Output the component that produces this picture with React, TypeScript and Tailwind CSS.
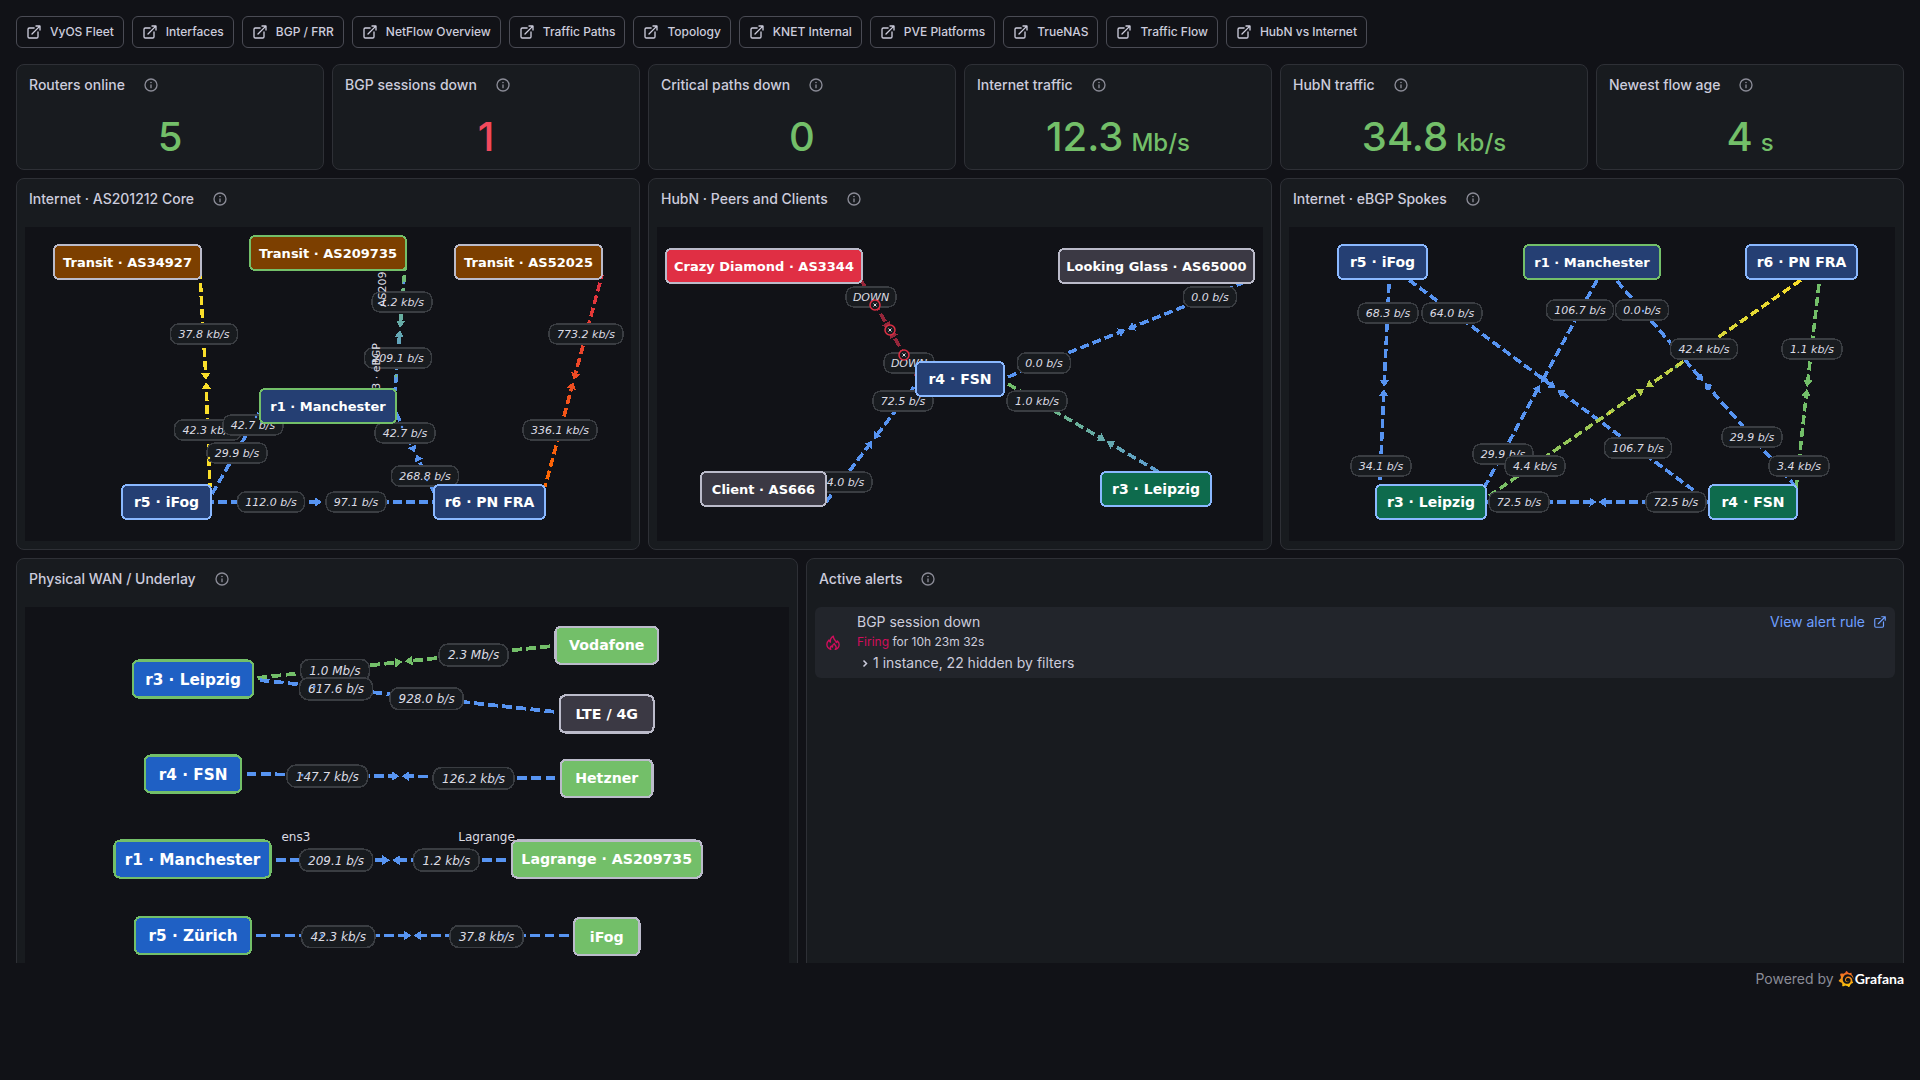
import { ReactNode } from "react";
import { SiGrafana } from "react-icons/si";

const GREEN = "#73bf69";
const BLUE = "#5794f2";
const LIGHT_BLUE = "#8ab8ff";
const GREY = "#bbbbca";
const YELLOW = "#fade2a";
const RED = "#e02f44";
const ORANGE = "#ff6a00";
const BROWN = "#7c3f00";
const NAVY = "#253f73";
const ROYAL = "#1f60c4";
const FOREST = "#0e6b4d";
const SLATE = "#3b3944";

type Point = [number, number];

interface MapNode {
  label: string;
  x: number;
  y: number;
  w: number;
  fill: string;
  stroke: string;
  size: number;
}

interface MapLink {
  a: Point;
  b: Point;
  mid?: Point;
  from: string;
  to?: string;
  phase?: number;
}

interface Rate {
  text: string;
  x: number;
  y: number;
}

interface Weathermap {
  name: string;
  width: number;
  height: number;
  nodes: MapNode[];
  links: MapLink[];
  rates: Rate[];
  dots?: { x: number; y: number; fill: string }[];
  down?: Point[];
  notes?: {
    text: string;
    x: number;
    y: number;
    vertical?: boolean;
    end?: boolean;
  }[];
}

const core: Weathermap = {
  name: "core",
  width: 606,
  height: 314,
  nodes: [
    { label: "Transit · AS34927", x: 29, y: 18, w: 147, fill: BROWN, stroke: GREY, size: 13 },
    { label: "Transit · AS209735", x: 225, y: 9, w: 156, fill: BROWN, stroke: GREEN, size: 13 },
    { label: "Transit · AS52025", x: 430, y: 18, w: 147, fill: BROWN, stroke: GREY, size: 13 },
    { label: "r1 · Manchester", x: 235, y: 162, w: 136, fill: NAVY, stroke: GREEN, size: 13 },
    { label: "r5 · iFog", x: 97, y: 258, w: 89, fill: NAVY, stroke: LIGHT_BLUE, size: 14 },
    { label: "r6 · PN FRA", x: 409, y: 258, w: 111, fill: NAVY, stroke: LIGHT_BLUE, size: 14 },
  ],
  links: [
    { a: [175, 48], b: [185, 260], mid: [181, 154], from: YELLOW, phase: 5 },
    { a: [380, 40], b: [370, 164], mid: [375, 102], from: GREEN, to: BLUE, phase: 5 },
    { a: [577, 48], b: [520, 260], from: RED, to: ORANGE, phase: 5 },
    { a: [234, 186], b: [187, 267], from: BLUE },
    { a: [371, 186], b: [410, 267], from: BLUE },
    { a: [185, 275], b: [411, 275], from: BLUE, phase: 5 },
  ],
  rates: [
    { text: "37.8 kb/s", x: 179, y: 107 },
    { text: "42.3 kb/s", x: 183, y: 203 },
    { text: "1.2 kb/s", x: 377, y: 75 },
    { text: "209.1 b/s", x: 373, y: 131 },
    { text: "773.2 kb/s", x: 561, y: 107 },
    { text: "336.1 kb/s", x: 535, y: 203 },
    { text: "42.7 b/s", x: 228, y: 198 },
    { text: "29.9 b/s", x: 212, y: 226 },
    { text: "42.7 b/s", x: 380, y: 206 },
    { text: "268.8 b/s", x: 400, y: 249 },
    { text: "112.0 b/s", x: 246, y: 275 },
    { text: "97.1 b/s", x: 331, y: 275 },
  ],
  dots: [
    { x: 184, y: 231, fill: YELLOW },
    { x: 379, y: 56, fill: BLUE },
    { x: 371, y: 149, fill: GREEN },
    { x: 377, y: 200, fill: BLUE },
    { x: 402, y: 253, fill: BLUE },
    { x: 231, y: 190, fill: BLUE },
  ],
  notes: [
    { text: "AS209735", x: 361, y: 80, vertical: true },
    { text: "ens3 · eBGP", x: 355, y: 116, vertical: true, end: true },
  ],
};

const peers: Weathermap = {
  name: "peers",
  width: 606,
  height: 314,
  nodes: [
    { label: "Crazy Diamond · AS3344", x: 9, y: 22, w: 196, fill: RED, stroke: GREY, size: 13 },
    { label: "Looking Glass · AS65000", x: 402, y: 22, w: 195, fill: SLATE, stroke: GREY, size: 13 },
    { label: "r4 · FSN", x: 259, y: 135, w: 88, fill: NAVY, stroke: LIGHT_BLUE, size: 14 },
    { label: "Client · AS666", x: 44, y: 245, w: 125, fill: SLATE, stroke: GREY, size: 13 },
    { label: "r3 · Leipzig", x: 444, y: 245, w: 110, fill: FOREST, stroke: LIGHT_BLUE, size: 14 },
  ],
  links: [
    { a: [204, 53], b: [262, 153], mid: [233, 103], from: "#96263a" },
    { a: [351, 150], b: [588, 55], from: BLUE },
    { a: [257, 160], b: [169, 275], mid: [216, 213], from: BLUE },
    { a: [351, 157], b: [546, 271], mid: [449, 214], from: GREEN, to: BLUE },
  ],
  rates: [
    { text: "DOWN", x: 214, y: 70 },
    { text: "DOWN", x: 252, y: 136 },
    { text: "0.0 b/s", x: 553, y: 70 },
    { text: "0.0 b/s", x: 387, y: 136 },
    { text: "72.5 b/s", x: 246, y: 174 },
    { text: "64.0 b/s", x: 185, y: 255 },
    { text: "1.0 kb/s", x: 380, y: 174 },
  ],
  down: [
    [218, 78],
    [233, 103],
    [247, 128],
  ],
};

const spokes: Weathermap = {
  name: "spokes",
  width: 606,
  height: 314,
  nodes: [
    { label: "r5 · iFog", x: 49, y: 18, w: 89, fill: NAVY, stroke: LIGHT_BLUE, size: 14 },
    { label: "r1 · Manchester", x: 235, y: 18, w: 136, fill: NAVY, stroke: GREEN, size: 13 },
    { label: "r6 · PN FRA", x: 457, y: 18, w: 111, fill: NAVY, stroke: LIGHT_BLUE, size: 14 },
    { label: "r3 · Leipzig", x: 87, y: 258, w: 110, fill: FOREST, stroke: LIGHT_BLUE, size: 14 },
    { label: "r4 · FSN", x: 420, y: 258, w: 88, fill: FOREST, stroke: LIGHT_BLUE, size: 14 },
  ],
  links: [
    { a: [100, 57], b: [91, 253], mid: [95, 161], from: BLUE },
    { a: [120, 53], b: [415, 271], from: BLUE },
    { a: [308, 53], b: [195, 261], from: BLUE },
    { a: [328, 54], b: [507, 260], mid: [415, 155], from: BLUE },
    { a: [512, 53], b: [200, 269], from: YELLOW, to: GREEN },
    { a: [530, 57], b: [507, 262], mid: [518, 161], from: GREEN },
    { a: [196, 275], b: [421, 275], from: BLUE, phase: 6 },
  ],
  rates: [
    { text: "68.3 b/s", x: 99, y: 86 },
    { text: "34.1 b/s", x: 92, y: 239 },
    { text: "64.0 b/s", x: 163, y: 86 },
    { text: "106.7 b/s", x: 349, y: 221 },
    { text: "106.7 b/s", x: 291, y: 83 },
    { text: "29.9 b/s", x: 214, y: 227 },
    { text: "0.0 b/s", x: 353, y: 83 },
    { text: "29.9 b/s", x: 463, y: 210 },
    { text: "42.4 kb/s", x: 415, y: 122 },
    { text: "4.4 kb/s", x: 246, y: 239 },
    { text: "1.1 kb/s", x: 523, y: 122 },
    { text: "3.4 kb/s", x: 510, y: 239 },
    { text: "72.5 b/s", x: 230, y: 275 },
    { text: "72.5 b/s", x: 387, y: 275 },
  ],
  dots: [
    { x: 354, y: 84, fill: BLUE },
    { x: 387, y: 140, fill: GREEN },
    { x: 321, y: 186, fill: YELLOW },
  ],
};

const underlay: Weathermap = {
  name: "underlay",
  width: 700,
  height: 420,
  nodes: [
    { label: "r3 · Leipzig", x: 99, y: 49, w: 110, fill: ROYAL, stroke: GREEN, size: 14 },
    { label: "r4 · FSN", x: 110, y: 136, w: 88, fill: ROYAL, stroke: GREEN, size: 14 },
    { label: "r1 · Manchester", x: 82, y: 214, w: 143, fill: ROYAL, stroke: GREEN, size: 14 },
    { label: "r5 · Zürich", x: 101, y: 284, w: 106, fill: ROYAL, stroke: GREEN, size: 14 },
    { label: "Vodafone", x: 486, y: 18, w: 94, fill: GREEN, stroke: GREY, size: 13 },
    { label: "LTE / 4G", x: 490, y: 81, w: 86, fill: SLATE, stroke: GREY, size: 13 },
    { label: "Hetzner", x: 491, y: 140, w: 84, fill: GREEN, stroke: GREY, size: 13 },
    { label: "Lagrange · AS209735", x: 446, y: 214, w: 174, fill: GREEN, stroke: GREY, size: 13 },
    { label: "iFog", x: 503, y: 285, w: 60, fill: GREEN, stroke: GREY, size: 13 },
  ],
  links: [
    { a: [213, 65], b: [481, 36], mid: [347, 50], from: GREEN },
    { a: [215, 67], b: [485, 96], from: BLUE },
    { a: [203, 153], b: [486, 157], mid: [344, 155], from: BLUE },
    { a: [230, 232], b: [441, 232], from: BLUE },
    { a: [212, 301], b: [498, 301], from: BLUE },
  ],
  rates: [
    { text: "1.0 Mb/s", x: 284, y: 58 },
    { text: "2.3 Mb/s", x: 411, y: 44 },
    { text: "617.6 b/s", x: 285, y: 75 },
    { text: "928.0 b/s", x: 368, y: 84 },
    { text: "147.7 kb/s", x: 277, y: 155 },
    { text: "126.2 kb/s", x: 411, y: 157 },
    { text: "209.1 b/s", x: 285, y: 232 },
    { text: "1.2 kb/s", x: 386, y: 232 },
    { text: "42.3 kb/s", x: 287, y: 302 },
    { text: "37.8 kb/s", x: 423, y: 302 },
  ],
  dots: [
    { x: 265, y: 73, fill: BLUE },
    { x: 254, y: 154, fill: BLUE },
    { x: 272, y: 301, fill: BLUE },
    { x: 435, y: 156, fill: BLUE },
    { x: 438, y: 301, fill: BLUE },
  ],
  notes: [
    { text: "ens3", x: 235, y: 214 },
    { text: "Lagrange", x: 397, y: 214 },
  ],
};

const dashboards = [
  "VyOS Fleet",
  "Interfaces",
  "BGP / FRR",
  "NetFlow Overview",
  "Traffic Paths",
  "Topology",
  "KNET Internal",
  "PVE Platforms",
  "TrueNAS",
  "Traffic Flow",
  "HubN vs Internet",
];

const stats = [
  { title: "Routers online", value: "5" },
  { title: "BGP sessions down", value: "1", bad: true },
  { title: "Critical paths down", value: "0" },
  { title: "Internet traffic", value: "12.3", unit: "Mb/s" },
  { title: "HubN traffic", value: "34.8", unit: "kb/s" },
  { title: "Newest flow age", value: "4", unit: "s" },
];

// advance widths of the 11px rate labels
const glyphs: Record<string, number> = {
  ".": 3.5,
  " ": 3.5,
  "/": 3.7,
  k: 6.4,
  s: 5.7,
  M: 9.5,
  D: 8,
  O: 8,
  W: 10,
  N: 8,
};

const rateWidth = (text: string) =>
  Math.round([...text].reduce((sum, c) => sum + (glyphs[c] ?? 7), 16));

function LinkIcon({ className }: { className: string }) {
  return (
    <svg viewBox="0 0 24 24" fill="currentColor" className={className}>
      <path d="M18,10.82a1,1,0,0,0-1,1V19a1,1,0,0,1-1,1H5a1,1,0,0,1-1-1V8A1,1,0,0,1,5,7h7.18a1,1,0,0,0,0-2H5A3,3,0,0,0,2,8V19a3,3,0,0,0,3,3H16a3,3,0,0,0,3-3V11.82A1,1,0,0,0,18,10.82Zm3.92-8.2a1,1,0,0,0-.54-.54A1,1,0,0,0,21,2H15a1,1,0,0,0,0,2h3.59L8.29,14.29a1,1,0,0,0,0,1.42,1,1,0,0,0,1.42,0L20,5.41V9a1,1,0,0,0,2,0V3A1,1,0,0,0,21.92,2.62Z" />
    </svg>
  );
}

function InfoIcon() {
  return (
    <svg viewBox="0 0 24 24" fill="currentColor" className="size-4">
      <path d="M12,2A10,10,0,1,0,22,12,10.01,10.01,0,0,0,12,2Zm0,18a8,8,0,1,1,8-8A8.01,8.01,0,0,1,12,20Zm0-9a1,1,0,0,0-1,1v4a1,1,0,0,0,2,0V12A1,1,0,0,0,12,11Zm0-4a1.25,1.25,0,1,0,1.25,1.25A1.25,1.25,0,0,0,12,7Z" />
    </svg>
  );
}

function FireIcon() {
  return (
    <svg
      viewBox="0 0 24 24"
      fill="none"
      stroke="currentColor"
      strokeWidth="2"
      strokeLinejoin="round"
      strokeLinecap="round"
      className="size-4 text-[#d10e5c]"
    >
      <path d="M8.5 21.5C5 20.3 2.8 17.4 2.8 13.8C2.8 10.8 4.5 9 6 7.5C6.2 9 6.8 10 8 10.8C7.6 7 9 3.8 12.5 1.8C12.5 5.5 14 7 15.5 8.5C16.2 9.3 16.7 10.3 16.8 11.3C17.8 10.8 18.3 10 18.5 9C20.3 10.5 21.2 12.3 21.2 14.3C21.2 17.8 19 20.5 15.5 21.5" />
      <path d="M8.5 21.5C7.3 19.5 8 17.7 9.5 16.5C9.8 17.5 10.3 18 11.2 18.2C11 15.8 12 14 14 12.8C14 15 16.8 16 16.8 18.6C16.8 19.8 16.4 20.8 15.5 21.5" />
    </svg>
  );
}

function Arrow({ tip, ux, uy, fill }: { tip: Point; ux: number; uy: number; fill: string }) {
  const bx = tip[0] - ux * 7;
  const by = tip[1] - uy * 7;
  const points = [
    tip,
    [bx - uy * 4.5, by + ux * 4.5],
    [bx + uy * 4.5, by - ux * 4.5],
  ];
  return <polygon points={points.map((p) => p.join(",")).join(" ")} fill={fill} />;
}

function MapLinkLine({ link, id }: { link: MapLink; id: string }) {
  const { a, b, from, to, phase = 0 } = link;
  const mid: Point = link.mid ?? [(a[0] + b[0]) / 2, (a[1] + b[1]) / 2];
  const length = Math.hypot(b[0] - a[0], b[1] - a[1]);
  const ux = (b[0] - a[0]) / length;
  const uy = (b[1] - a[1]) / length;
  const paint = to ? `url(#${id})` : from;

  return (
    <>
      {to && (
        <linearGradient id={id} gradientUnits="userSpaceOnUse" x1={a[0]} y1={a[1]} x2={b[0]} y2={b[1]}>
          <stop offset="0" stopColor={from} />
          <stop offset="1" stopColor={to} />
        </linearGradient>
      )}
      <g stroke={paint} strokeWidth="3.5" strokeDasharray="9 4" strokeDashoffset={phase}>
        <line x1={a[0]} y1={a[1]} x2={mid[0] - ux * 5} y2={mid[1] - uy * 5} />
        <line x1={b[0]} y1={b[1]} x2={mid[0] + ux * 5} y2={mid[1] + uy * 5} />
      </g>
      <Arrow tip={[mid[0] - ux, mid[1] - uy]} ux={ux} uy={uy} fill={paint} />
      <Arrow tip={[mid[0] + ux, mid[1] + uy]} ux={-ux} uy={-uy} fill={paint} />
    </>
  );
}

function NetworkMap({ map }: { map: Weathermap }) {
  return (
    <svg
      viewBox={`0 0 ${map.width} ${map.height}`}
      className="block h-auto w-full bg-[#111217] font-['DejaVu_Sans',sans-serif]"
      textAnchor="middle"
    >
      <g shapeRendering="crispEdges">
        {map.links.map((link, i) => (
          <MapLinkLine key={i} link={link} id={`${map.name}-${i}`} />
        ))}
      </g>
      {map.rates.map((rate, i) => {
        const w = rateWidth(rate.text);
        return (
          <g key={i}>
            <rect
              x={rate.x - w / 2}
              y={rate.y - 10}
              width={w}
              height="20"
              rx="8"
              fill="#181b1f"
              stroke="#3a3d42"
              strokeWidth="1.5"
              shapeRendering="crispEdges"
            />
            <text x={rate.x} y={rate.y + 4} fontSize="11" fontStyle="italic" fill="#dcdce4">
              {rate.text}
            </text>
          </g>
        );
      })}
      {map.dots?.map((dot, i) => (
        <circle key={i} cx={dot.x} cy={dot.y} r="1.2" fill={dot.fill} />
      ))}
      {map.down?.map(([x, y]) => (
        <g key={y} stroke={RED}>
          <circle cx={x} cy={y} r="5" fill="#181b1f" strokeWidth="1.5" />
          <path d={`M${x - 1.5} ${y - 1.5}l3 3m0-3l-3 3`} stroke="#dcdce4" strokeWidth="1" />
        </g>
      ))}
      {map.notes?.map((note) => (
        <text
          key={note.text}
          x={note.x}
          y={note.y}
          fontSize="11"
          fill="#dcdce4"
          textAnchor={note.end ? "end" : "start"}
          transform={note.vertical ? `rotate(-90 ${note.x} ${note.y})` : undefined}
        >
          {note.text}
        </text>
      ))}
      {map.nodes.map((node) => (
        <g key={node.label}>
          <rect
            x={node.x}
            y={node.y}
            width={node.w}
            height="34"
            rx="5"
            fill={node.fill}
            stroke={node.stroke}
            strokeWidth="2"
            shapeRendering="crispEdges"
          />
          <text
            x={node.x + node.w / 2}
            y={node.y + (node.size === 14 ? 22.4 : 21.5)}
            fontSize={node.size}
            fontWeight="700"
            fill="#fff"
          >
            {node.label}
          </text>
        </g>
      ))}
    </svg>
  );
}

function Panel({ title, className, children }: { title: string; className: string; children: ReactNode }) {
  return (
    <section
      className={`flex flex-col rounded-lg border border-[#2e3036] bg-[#181b1f] ${className}`}
    >
      <header className="flex h-10 items-center gap-[18px] px-3">
        <h2 className="text-sm font-medium">{title}</h2>
        <button type="button" aria-label={`About ${title}`} className="text-[#8b8c97]">
          <InfoIcon />
        </button>
      </header>
      {children}
    </section>
  );
}

export default function App() {
  return (
    <div className="min-h-screen bg-[#111217] p-4 font-[Inter,sans-serif] text-[#ccccdc]">
      <nav className="mb-4 flex flex-wrap gap-2">
        {dashboards.map((name) => (
          <a
            key={name}
            href="#"
            className="flex h-8 items-center gap-2 rounded-md border border-[#4a4b54] px-[9px] text-xs font-medium"
          >
            <LinkIcon className="size-4" />
            {name}
          </a>
        ))}
      </nav>

      <main className="grid grid-cols-12 gap-2">
        {stats.map((stat) => (
          <Panel key={stat.title} title={stat.title} className="col-span-2 h-[106px]">
            <p
              className={`flex flex-1 items-baseline justify-center gap-2 pt-2 font-medium ${
                stat.bad ? "text-[#f2495c]" : "text-[#73bf69]"
              }`}
            >
              <span className="text-[40px] leading-12">{stat.value}</span>
              {stat.unit && <span className="text-2xl">{stat.unit}</span>}
            </p>
          </Panel>
        ))}

        <Panel title="Internet · AS201212 Core" className="col-span-4">
          <div className="p-2">
            <NetworkMap map={core} />
          </div>
        </Panel>
        <Panel title="HubN · Peers and Clients" className="col-span-4">
          <div className="p-2">
            <NetworkMap map={peers} />
          </div>
        </Panel>
        <Panel title="Internet · eBGP Spokes" className="col-span-4">
          <div className="p-2">
            <NetworkMap map={spokes} />
          </div>
        </Panel>

        <div className="col-span-12 grid h-[405px] grid-cols-12 gap-2 overflow-hidden">
          <Panel title="Physical WAN / Underlay" className="col-span-5">
            <div className="p-2">
              <NetworkMap map={underlay} />
            </div>
          </Panel>
          <Panel title="Active alerts" className="col-span-7">
            <div className="p-2">
              <div className="flex items-center rounded-md bg-[#22252b] pt-1 pr-2 pb-[3px] pl-[10px]">
                <FireIcon />
                <div className="ml-4 flex-1">
                  <p className="text-sm leading-[22px]">BGP session down</p>
                  <p className="text-xs leading-[18px]">
                    <span className="text-[#d10e5c]">Firing</span> for 10h 23m 32s
                  </p>
                  <button type="button" className="flex h-6 items-center gap-1 pl-1 text-sm">
                    <svg viewBox="0 0 8 16" className="h-4 w-2" fill="none" stroke="currentColor" strokeWidth="1.5">
                      <path d="M2.5 5.5L5.5 8.5L2.5 11.5" />
                    </svg>
                    1 instance, 22 hidden by filters
                  </button>
                </div>
                <a href="#" className="flex items-center gap-2 self-start text-sm leading-[22px] text-[#6e9fff]">
                  View alert rule
                  <LinkIcon className="size-[14px]" />
                </a>
              </div>
            </div>
          </Panel>
        </div>
      </main>

      <footer className="flex h-8 items-center justify-end text-sm text-[#8b8c97]">
        Powered by
        <a href="#" className="ml-1 flex items-center gap-px font-[Lato,sans-serif] font-bold text-white">
          <svg className="absolute size-0" aria-hidden="true">
            <linearGradient id="grafana-mark" x1="0" y1="0" x2="0" y2="1">
              <stop offset="0" stopColor="#f05a28" />
              <stop offset="1" stopColor="#fbca0a" />
            </linearGradient>
          </svg>
          <SiGrafana className="size-4" fill="url(#grafana-mark)" />
          Grafana
        </a>
      </footer>
    </div>
  );
}
